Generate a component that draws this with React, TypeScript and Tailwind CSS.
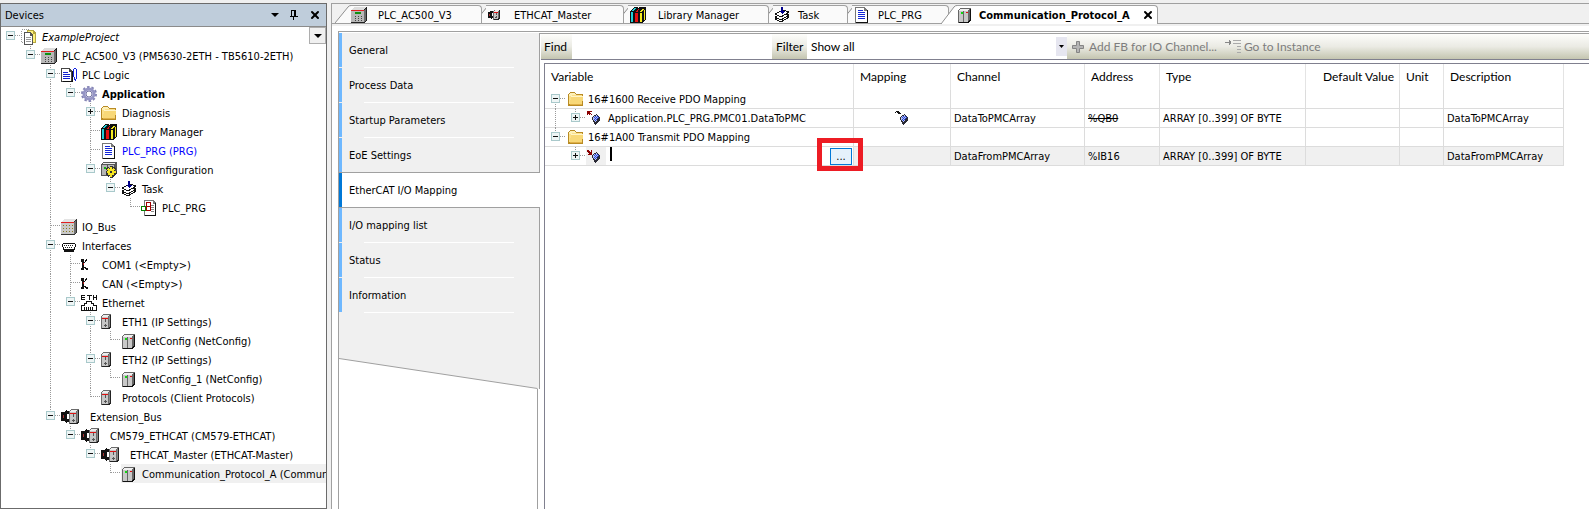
import React, { useState } from 'react';
import { X } from 'lucide-react';

type IconName =
  | 'project' | 'plc' | 'logic' | 'gear' | 'folder' | 'library' | 'pou' | 'taskConfig' | 'task'
  | 'call' | 'bus' | 'port' | 'plug' | 'ethernet' | 'device' | 'module' | 'plugDevice';

type TreeRow = { depth: number; icon: IconName; label: string; open?: boolean; style?: string };

const TREE: TreeRow[] = [
  { depth: 0, icon: 'project', label: 'ExampleProject', open: true, style: 'italic' },
  { depth: 1, icon: 'plc', label: 'PLC_AC500_V3 (PM5630-2ETH - TB5610-2ETH)', open: true },
  { depth: 2, icon: 'logic', label: 'PLC Logic', open: true },
  { depth: 3, icon: 'gear', label: 'Application', open: true, style: 'font-bold' },
  { depth: 4, icon: 'folder', label: 'Diagnosis', open: false },
  { depth: 4, icon: 'library', label: 'Library Manager' },
  { depth: 4, icon: 'pou', label: 'PLC_PRG (PRG)', style: 'text-[#0000ff]' },
  { depth: 4, icon: 'taskConfig', label: 'Task Configuration', open: true },
  { depth: 5, icon: 'task', label: 'Task', open: true },
  { depth: 6, icon: 'call', label: 'PLC_PRG' },
  { depth: 2, icon: 'bus', label: 'IO_Bus' },
  { depth: 2, icon: 'port', label: 'Interfaces', open: true },
  { depth: 3, icon: 'plug', label: 'COM1 (<Empty>)' },
  { depth: 3, icon: 'plug', label: 'CAN (<Empty>)' },
  { depth: 3, icon: 'ethernet', label: 'Ethernet', open: true },
  { depth: 4, icon: 'device', label: 'ETH1 (IP Settings)', open: true },
  { depth: 5, icon: 'module', label: 'NetConfig (NetConfig)' },
  { depth: 4, icon: 'device', label: 'ETH2 (IP Settings)', open: true },
  { depth: 5, icon: 'module', label: 'NetConfig_1 (NetConfig)' },
  { depth: 4, icon: 'device', label: 'Protocols (Client Protocols)' },
  { depth: 2, icon: 'plugDevice', label: 'Extension_Bus', open: true },
  { depth: 3, icon: 'plugDevice', label: 'CM579_ETHCAT (CM579-ETHCAT)', open: true },
  { depth: 4, icon: 'plugDevice', label: 'ETHCAT_Master (ETHCAT-Master)', open: true },
  { depth: 5, icon: 'module', label: 'Communication_Protocol_A (Communic' },
];

const SECTIONS = [
  'General', 'Process Data', 'Startup Parameters', 'EoE Settings',
  'EtherCAT I/O Mapping', 'I/O mapping list', 'Status', 'Information',
];

const COLUMNS = [
  { name: 'Variable', width: 'w-[309px]' },
  { name: 'Mapping', width: 'w-[97px]' },
  { name: 'Channel', width: 'w-[134px]' },
  { name: 'Address', width: 'w-[75px]' },
  { name: 'Type', width: 'w-[146px]' },
  { name: 'Default Value', width: 'w-[94px]' },
  { name: 'Unit', width: 'w-[44px]' },
  { name: 'Description', width: 'w-[120px]' },
];

// Is there another row at this depth before the branch closes?
const hasNext = (index: number, depth: number) => {
  for (let i = index + 1; i < TREE.length; i++) {
    if (TREE[i].depth < depth) return false;
    if (TREE[i].depth === depth) return true;
  }
  return false;
};

const DeviceBox = () => (
  <>
    <path d="M0 2 2 0h8v13l-2 2H0z" fill="#6a6a6a" />
    <path d="M1 2 3 1h5L7 3H1z" fill="#ececec" />
    <path d="M1 3h6v11H1z" fill="#c6c6c6" />
    <path d="M8 2h1v11H8z" fill="#8a8a8a" />
    <path d="M9 1h1v12l-2 2H1v-1h6l2-2z" fill="#222" />
    <path d="M1 4h6v1H1z" fill="#e01010" />
    <path d="M4 5h1v3H4zM3 11h3v1H3zM4 10h1v3H4z" fill="#555" />
  </>
);

const ICONS: Record<IconName, React.ReactNode> = {
  project: (
    <>
      <path d="M.5.500h8v13h-8z" fill="none" stroke="#999" strokeDasharray="1 1" />
      <path d="M6 1h6l3 3v10H6z" fill="#b5a642" />
      <path d="M7 2h5v3h2v8H7z" fill="#fff27a" />
      <path d="M3 3h6l3 3v10H3z" fill="#555" />
      <path d="M4 4h5v3h2v8H4z" fill="#fff" />
      <path d="M5 8.500h5M5 10.500h5M5 12.500h5" stroke="#999" />
    </>
  ),
  plc: (
    <>
      <path d="M0 3 3 0h13v13l-3 3H0z" fill="#222" />
      <path d="M0 3 3 0h12l-2 3z" fill="#ddd" />
      <path d="M0 3h13v12H0z" fill="#b8b8b8" />
      <path d="M13 3 15 1v12l-2 2z" fill="#6b6b6b" />
      <path d="M0 3h13v1H0z" fill="#e02020" />
      <path d="M4 5h6v2H4z" fill="#109010" />
      <path d="M4 9h1v1H4zM7 9h1v1H7zM10 9h1v1h-1zM4 11h1v1H4zM7 11h1v1H7zM10 11h1v1h-1zM4 13h1v1H4zM7 13h1v1H7zM10 13h1v1h-1z" fill="#444" />
    </>
  ),
  logic: (
    <>
      <path d="M0 1h8l3 3v11H0z" fill="#444" />
      <path d="M1 2h7v3h2v9H1z" fill="#fff" />
      <path d="M2 5.500h5M2 7.500h7M2 9.500h7M2 11.500h7" stroke="#1020d0" />
      <path d="M11 4h1v11H2v-1h9z" fill="#111" />
      <path d="M13 1h2v1h-2zM12 2h1v8h-1zM15 2h1v10h-1zM13 10h1v3h-1zM14 12h1v2h-1z" fill="#1020e0" />
    </>
  ),
  gear: (
    <>
      <circle cx="8" cy="8" r="7" fill="none" stroke="#8585b5" strokeWidth="2" strokeDasharray="2.500 1.900" />
      <circle cx="8" cy="8" r="5" fill="none" stroke="#9595c5" strokeWidth="3" />
      <circle cx="8" cy="8" r="3" fill="#fff" stroke="#7777a5" />
    </>
  ),
  folder: (
    <>
      <path d="M0 3 2 1h4l2 2h7v12H0z" fill="#b98b24" />
      <path d="M1 3l1-1h4l2 2h6v3H1z" fill="#fdf0b8" />
      <path d="M1 5h2l1-1h10v9H1z" fill="#fbe08a" />
      <path d="M3 5h12v1l-1 8H2z" fill="#f8d878" />
      <path d="M3 5h12v1H3z" fill="#fff4c8" />
      <path d="M2 13h12v1H2z" fill="#e0b048" />
    </>
  ),
  library: (
    <>
      <path d="M0 5 4 0h3l1 1 2-1h6v12l-3 4H0z" fill="#111" />
      <path d="M1 5h2v10H1zM2 4l2-3h2L4 4z" fill="#20d0d8" />
      <path d="M5 6h3v9H5zM5 5l3-3h1L8 5z" fill="#e81010" />
      <path d="M10 6h2v9h-2zM14 3h1v9l-1 1zM10 5l2-3h2l-2 3z" fill="#f5ea20" />
    </>
  ),
  pou: (
    <>
      <path d="M1 0h9l3 3v13H1z" fill="#777" />
      <path d="M2 1h8v3h3v11H2z" fill="#fff" />
      <path d="M13 3h1v13H2v-1h11z" fill="#111" />
      <path d="M4 3.500h5M4 5.500h7M4 7.500h7M4 9.500h7M4 11.500h7" stroke="#1428d8" />
    </>
  ),
  taskConfig: (
    <>
      <path d="M0 2 2 0h14v11l-2 3H0z" fill="#555" />
      <path d="M1 3h5v10H1zM7 3h6v10H7z" fill="#b5b5b5" />
      <path d="M1 2 3 1h12l-2 1z" fill="#eee" />
      <path d="M3 5h2v2H3z" fill="#10b010" />
      <path d="M10 4v12M4.500 10h11.500M6 6l8 8M14 6l-8 8" stroke="#333" strokeWidth="3" />
      <path d="M10 5v10M5.500 10h9M7 7l6 6M13 7l-6 6" stroke="#f5e520" strokeWidth="2" />
      <path d="M9 9h2v2H9z" fill="#333" />
    </>
  ),
  task: (
    <>
      <path d="M1 12l8-4 6 2-8 5z" fill="#fff" stroke="#111" />
      <path d="M1 10l8-4 6 2-8 5z" fill="#fff" stroke="#111" />
      <path d="M1 7l8-4 6 2-8 5z" fill="#fff" stroke="#111" />
      <path d="M7 0h2v4h2L8 7 5 4h2z" fill="#00008b" />
    </>
  ),
  call: (
    <>
      <path d="M3 0h9l3 3v13H3z" fill="#777" />
      <path d="M4 1h8v3h2v11H4z" fill="#fff" />
      <path d="M14 3h1v13H4v-1h10z" fill="#111" />
      <path d="M10 5.500h3M10 7.500h3M10 9.500h3M10 11.500h3" stroke="#888" />
      <path d="M5.500 2.500h4v4h-4z" fill="#fff" stroke="#a00000" />
      <path d="M5.500 6.500h4v4h-4z" fill="#fff" stroke="#a00000" />
      <path d="M.5 6.500h4v4h-4z" fill="#fff" stroke="#008000" />
    </>
  ),
  bus: (
    <>
      <path d="M0 3 3 0h13v13l-3 3H0z" fill="#333" />
      <path d="M0 3 3 0h12l-2 3z" fill="#e4e4e4" />
      <path d="M0 3h13v12H0z" fill="#c9c9c9" />
      <path d="M13 3 15 1v12l-2 2z" fill="#707070" />
      <path d="M0 3h13v1H0z" fill="#e02020" />
      <path d="M2 6.500h10M2 9.500h10M2 12.500h10" stroke="#8a7b20" strokeDasharray="1 2" />
    </>
  ),
  port: (
    <>
      <path d="M2 5h12v1h1v3h-1v3h-1v2H3v-2H2V9H1V6h1z" fill="#111" />
      <path d="M2 6h12v3h-1v2H3V9H2z" fill="#fff" />
      <path d="M3 7.500h10M4 9.500h8" stroke="#222" strokeDasharray="1 1" />
    </>
  ),
  plug: (
    <>
      <path d="M0 2h3v3h1v1H3v4h1v1H3v2H0v-2h1V5H0z" fill="#111" />
      <path d="M4 3h1v2H4zM5 2h1v2H5zM4 10h1v2H4zM5 11h2v2H5z" fill="#111" />
      <path d="M2 6h1v2H2z" fill="#b01010" />
    </>
  ),
  ethernet: (
    <>
      <path d="M0 0h4v1H1v1h3v1H1v1h3v1H0zM6 0h5v1H9v4H8V1H6zM12 0h1v2h2V0h1v5h-1V3h-2v2h-1z" fill="#111" />
      <path d="M.5 15.500v-5h3v-2h2v-2h5v2h2v2h3v5z" fill="#fff" stroke="#111" />
      <path d="M3 13.500h10" stroke="#111" strokeWidth="3" strokeDasharray="1 1" />
    </>
  ),
  device: <DeviceBox />,
  module: (
    <>
      <path d="M1 3 4 1h10v12l-3 3H1z" fill="#666" />
      <path d="M2 3l2-1h8l-2 2H2z" fill="#f0f0f0" />
      <path d="M2 4h4v11H2zM7 4h4v11H7z" fill="#c8c8c8" />
      <path d="M13 2h1v11l-3 3H2v-1h9l2-3z" fill="#111" />
      <path d="M4 5h2v2H4z" fill="#10d810" />
      <path d="M9 5h2v1H9z" fill="#e01010" />
    </>
  ),
  plugDevice: (
    <>
      <path d="M0 3h3l3-2v13l-3-2H0z" fill="#111" />
      <path d="M6 5l2-3M6 10l2 3" stroke="#111" strokeWidth="2" />
      <path d="M2 6h1v3H2z" fill="#a33" />
      <g transform="translate(8 0)"><DeviceBox /></g>
    </>
  ),
};

const Icon = ({ name, small }: { name: IconName; small?: boolean }) => (
  <svg
    className={`h-4 shrink-0 ${name === 'plugDevice' && !small ? 'w-6' : 'w-4'}`}
    viewBox={name === 'plugDevice' ? '0 0 24 16' : '0 0 16 16'}
    shapeRendering={name === 'gear' ? 'auto' : 'crispEdges'}
    aria-hidden="true"
  >
    {ICONS[name]}
  </svg>
);

const Expander = ({ open }: { open: boolean }) => (
  <>
    <path d="M5 4h9v9H5z" fill="#eef5f5" />
    <path d="M5.500 4.500h8v8h-8z" fill="none" stroke="#a9c9cb" />
    <path d="M7 8.500h5" stroke="#111" />
    {!open && <path d="M9.500 6v5" stroke="#111" />}
  </>
);

// One 20px indent step with its dotted guide lines.
const Guide = ({ up, down, across, open }: { up?: boolean; down?: boolean; across?: boolean; open?: boolean }) => (
  <svg className="h-[19px] w-5 shrink-0" viewBox="0 0 20 19" shapeRendering="crispEdges" aria-hidden="true">
    <g stroke="#9a9a9a" strokeDasharray="1 1" fill="none">
      {up && <path d="M9.500 0v9" />}
      {down && <path d="M9.500 8v11" />}
      {across && <path d="M10 8.500h10" />}
    </g>
    {open !== undefined && <Expander open={open} />}
  </svg>
);

const DeviceTree = () => (
  <aside className="flex w-[327px] shrink-0 flex-col border border-[#6b6b6b] bg-white">
    <header className="flex h-[23px] shrink-0 items-center justify-between border-b border-[#8b8b8b] bg-[#bfcddb] pl-1 pr-[5px]">
      <h2 className="pt-[2px]">Devices</h2>
      <div className="flex items-center gap-[11px]">
        <button aria-label="Window position">
          <svg className="h-2 w-2" viewBox="0 0 8 8" aria-hidden="true"><path d="M0 2h8L4 6z" /></svg>
        </button>
        <button aria-label="Auto hide">
          <svg className="h-[10px] w-2" viewBox="0 0 8 10" shapeRendering="crispEdges" aria-hidden="true">
            <path d="M1.500 6V.5h4V6M0 6.500h8M3.500 7v3M4.500 0v6" fill="none" stroke="#000" />
          </svg>
        </button>
        <button aria-label="Close"><X size={12} strokeWidth={4} /></button>
      </div>
    </header>
    <div className="flex min-h-0 flex-1 items-start overflow-hidden">
      <ul className="w-0 min-w-0 flex-1">
        {TREE.map((row, i) => (
          <li key={i} className="flex h-[19px] items-center">
            {Array.from({ length: row.depth }, (_, k) => (
              <Guide key={k} up={hasNext(i, k)} down={hasNext(i, k)} />
            ))}
            <Guide up={i > 0} down={hasNext(i, row.depth)} across open={row.open} />
            <div className={`flex h-full min-w-0 flex-1 items-center gap-[5px] whitespace-nowrap ${i === TREE.length - 1 ? '-mr-[22px] bg-[#f0f0f0]' : ''}`}>
              <Icon name={row.icon} />
              <span className={`pt-[2px] ${row.style ?? ''}`}>{row.label}</span>
            </div>
          </li>
        ))}
      </ul>
      <button aria-label="Tree options" className="flex h-[17px] w-[17px] items-center justify-center border border-[#adadad] bg-[#f0f0f0]">
        <svg className="h-2 w-2" viewBox="0 0 8 8" aria-hidden="true"><path d="M0 2h8L4 6z" /></svg>
      </button>
    </div>
  </aside>
);

const TABS: { label: string; icon: IconName; width: string; pad: string }[] = [
  { label: 'PLC_AC500_V3', icon: 'plc', width: 'w-[147px]', pad: 'gap-[11px]' },
  { label: 'ETHCAT_Master', icon: 'plugDevice', width: 'w-[142px]', pad: 'gap-[10px] pl-[2px]' },
  { label: 'Library Manager', icon: 'library', width: 'w-[145px]', pad: 'gap-3 pl-[2px]' },
  { label: 'Task', icon: 'task', width: 'w-[79px]', pad: 'gap-2 pl-px' },
  { label: 'PLC_PRG', icon: 'pou', width: 'w-[101px]', pad: 'gap-2 pl-[2px]' },
];

const EditorTabs = () => (
  <div role="tablist" className="flex h-5 shrink-0 items-start border-b border-[#a0a0a0] bg-[#f0f0f0] pl-[3px] pt-px">
    {TABS.map((tab, i) => (
      <button key={tab.label} role="tab" aria-selected={false} className={`flex h-[18px] whitespace-nowrap ${tab.width}`}>
        <svg className={`h-[18px] shrink-0 ${i === 0 ? 'w-4' : 'w-2'}`} viewBox={i === 0 ? '0 0 16 18' : '8 0 8 18'} aria-hidden="true">
          <path d={i === 0 ? 'M0 18 14 2l2-2v18z' : 'M8 9l6-7 2-2v18H8z'} fill="#fafafa" />
          <path d="M0 18 13 2Q14 .5 16 .5" fill="none" stroke="#909090" />
        </svg>
        <span className={`flex h-full flex-1 items-center rounded-tr-sm border-r border-t border-[#a0a0a0] bg-[#fafafa] ${tab.pad} ${i ? '-ml-1' : ''}`}>
          <Icon name={tab.icon} small />
          <span className="pt-[2px]">{tab.label}</span>
        </span>
      </button>
    ))}
    <button role="tab" aria-selected className="-ml-2 flex h-[19px] whitespace-nowrap font-bold">
      <svg className="h-[19px] w-4 shrink-0" viewBox="0 0 16 19" aria-hidden="true">
        <path d="M0 19 13 2l3-2v19z" fill="#fff" />
        <path d="M0 19 13 2Q14 .5 16 .5" fill="none" stroke="#909090" />
      </svg>
      <span className="flex h-full items-center gap-[6px] rounded-tr-sm border-r border-t border-[#a0a0a0] bg-white pr-[3px]">
        <Icon name="module" />
        <span className="pt-px">Communication_Protocol_A</span>
        <X size={12} strokeWidth={4} className="ml-[6px]" />
      </span>
    </button>
  </div>
);

const SectionNav = ({ active, onSelect }: { active: string; onSelect: (s: string) => void }) => (
  <nav className="flex w-[201px] shrink-0 flex-col">
    {SECTIONS.map((name) => {
      const selected = name === active;
      return (
        <button
          key={name}
          onClick={() => onSelect(name)}
          className={`flex h-[35px] items-stretch text-left ${selected ? 'border-b border-[#a0a0a0] bg-white shadow-[0_-1px_0_#a0a0a0]' : 'border-r border-r-[#a0a0a0] bg-[#f0f0f0]'}`}
        >
          <span className={`w-[3px] shrink-0 ${selected ? 'bg-[#0078d7]' : 'mb-px bg-[#6eb8ff]'}`} />
          <span className="ml-[7px] flex w-[165px] flex-col">
            <span className="flex flex-1 items-center pt-[2px]">{name}</span>
            {!selected && <span className="ml-[15px] h-px shrink-0 bg-white" />}
          </span>
        </button>
      );
    })}
    <svg className="h-[76px] w-full shrink-0" viewBox="0 0 201 76" preserveAspectRatio="none" aria-hidden="true">
      <path d="M0 0h201v75.500h-2L0 45.500z" fill="#f0f0f0" />
      <path d="M0 45.500l198.500 30M200.500 0v76" fill="none" stroke="#a0a0a0" />
    </svg>
    <div className="mr-[2px] flex-1 border-r border-[#a0a0a0]" />
  </nav>
);

const Toolbar = () => (
  <div className="ml-px flex h-[26px] shrink-0 items-stretch border-b border-[#80808f] bg-linear-to-b from-[#fdfdfb] via-[#ebebe4] to-[#c4c5b0] font-['Lato','Open_Sans',sans-serif] text-xs">
    <label htmlFor="find" className="flex w-[31px] items-center pl-[3px]">Find</label>
    <input id="find" className="w-[200px] bg-white px-1 outline-none" />
    <label htmlFor="filter" className="flex w-[35px] items-center pl-1">Filter</label>
    <div className="relative flex w-[260px] bg-white">
      <select id="filter" className="w-full appearance-none bg-white pl-1 pt-px outline-none">
        <option>Show all</option>
      </select>
      <span className="pointer-events-none absolute inset-y-0 right-0 my-[3px] flex w-[11px] items-center justify-center bg-[#e6e6f0]">
        <svg className="h-1 w-[5px]" viewBox="0 0 5 4" aria-hidden="true"><path d="M0 0h5L2.500 3z" /></svg>
      </span>
    </div>
    <button disabled className="flex items-center gap-[5px] whitespace-nowrap pl-[5px] text-[#7d7d7d]">
      <svg className="h-3 w-3" viewBox="0 0 12 12" aria-hidden="true">
        <path d="M4.500.5h3v4h4v3h-4v4h-3v-4h-4v-3h4z" fill="#b5b5b5" stroke="#858585" />
      </svg>
      Add FB for IO Channel...
    </button>
    <button disabled className="flex items-center gap-[3px] whitespace-nowrap pl-2 text-[#7d7d7d]">
      <svg className="h-4 w-4" viewBox="0 0 16 16" shapeRendering="crispEdges" aria-hidden="true">
        <path d="M0 3.500h6M4 1v5M5 2v3" stroke="#888" />
        <path d="M8 1.500h8M8 4.500h8M12 7.500h4M12 10.500h4M12 13.500h4" stroke="#aaa" />
      </svg>
      Go to Instance
    </button>
  </div>
);

const ChannelIcon = ({ dir }: { dir: 'out' | 'in' | 'map' }) => (
  <svg className="h-4 w-4 shrink-0" viewBox="0 0 16 16" shapeRendering="crispEdges" aria-hidden="true">
    {dir === 'out' && <path d="M1 1h5v1H4v1h1v1h1v1H5V4H4v1H3V4H2v1H1z" fill="#8b0000" />}
    {dir === 'in' && <path d="M1 2h2v1h1v1h1V2h1v5H2V6h1V5H2V4H1z" fill="#8b0000" />}
    {dir === 'map' && <path d="M1 2h1V1h3v1h1v1h1v1H4V3H3V2H2v1H1z" fill="#111" />}
    <path d="M10 4h1v1h1v1h1v1h1v4h-1v1h-1v1h-1v1h-1v1H9v-1H8v-2H7v-2H6V7h1V6h1V5h2z" fill="#2a2a35" />
    <path d="M10 5h1v1h1v1h1v1h-1v1h-1v2h-1v1H9v-1H8v-1H7V7h1V6h2z" fill="#b6c2f2" />
    <path d="M9 6h1v1H9zM11 6h1v1h-1zM8 7h1v1H8zM10 7h1v1h-1zM12 7h1v1h-1zM9 8h1v1H9zM11 8h1v1h-1zM8 9h1v1H8zM10 9h1v1h-1zM9 10h1v1H9z" fill="#2440d8" />
  </svg>
);

const GroupRow = ({ label, last }: { label: string; last?: boolean }) => (
  <tr className="h-[19px]">
    <td className="border-b border-r border-[#dcdcdc] p-0">
      <div className="flex h-[18px] items-center whitespace-nowrap pl-px">
        <Guide up={last} down={!last} across open />
        <span className="ml-[2px] flex"><Icon name="folder" /></span>
        <span className="pl-1 pt-[2px]">{label}</span>
      </div>
    </td>
    {COLUMNS.slice(1).map((c) => <td key={c.name} className="border-b border-r border-[#dcdcdc] p-0" />)}
  </tr>
);

const MappingTable = () => {
  const [variable, setVariable] = useState('');
  const cell = 'whitespace-nowrap border-b border-r border-[#dcdcdc] p-0 pl-[3px] pt-[2px]';

  return (
    <table className="w-[1019px] table-fixed border-separate border-spacing-0">
      <thead>
        <tr className="h-[26px] font-['Lato','Open_Sans',sans-serif] text-xs">
          {COLUMNS.map((c) => (
            <th
              key={c.name}
              className={`whitespace-nowrap border-r border-[#e4e4e4] p-0 font-normal ${c.width} ${c.name === 'Default Value' ? 'pr-[5px] text-right' : 'pl-[6px] text-left'}`}
            >
              {c.name}
            </th>
          ))}
        </tr>
      </thead>
      <tbody>
        <GroupRow label="16#1600 Receive PDO Mapping" />
        <tr className="h-[19px]">
          <td className="border-b border-r border-[#dcdcdc] p-0">
            <div className="flex h-[18px] items-center whitespace-nowrap pl-px">
              <Guide up down />
              <Guide up across open={false} />
              <ChannelIcon dir="out" />
              <span className="pl-[6px] pt-[2px]">Application.PLC_PRG.PMC01.DataToPMC</span>
            </div>
          </td>
          <td className="border-b border-r border-[#dcdcdc] p-0"><div className="flex justify-center"><ChannelIcon dir="map" /></div></td>
          <td className={cell}>DataToPMCArray</td>
          <td className={cell}><s>%QB0</s></td>
          <td className={cell}>ARRAY [0..399] OF BYTE</td>
          <td className={cell} />
          <td className={cell} />
          <td className={cell}>DataToPMCArray</td>
        </tr>
        <GroupRow label="16#1A00 Transmit PDO Mapping" last />
        <tr className="h-[19px] bg-[#f0f0f0]">
          <td className="border-b border-r border-[#dcdcdc] bg-white p-0">
            <div className="relative flex h-[18px] items-center pl-px">
              <Guide />
              <Guide up across open={false} />
              <span className="flex h-full w-5 items-center bg-[#f0f0f0]"><ChannelIcon dir="in" /></span>
              <span className="ml-1 h-[14px] w-[2px] self-start bg-black" />
              <input
                aria-label="Variable"
                value={variable}
                onChange={(e) => setVariable(e.target.value)}
                className="h-full min-w-0 flex-1 outline-none"
              />
              <button aria-label="Browse" className="mr-px flex h-[17px] w-[22px] items-center justify-center border border-[#0078d7] bg-[#e5f1fb] pt-[2px]">...</button>
              <span className="pointer-events-none absolute -right-[10px] -top-[9px] h-[33px] w-[46px] border-5 border-[#ed1c24]" />
            </div>
          </td>
          <td className={cell} />
          <td className={cell}>DataFromPMCArray</td>
          <td className={cell}>%IB16</td>
          <td className={cell}>ARRAY [0..399] OF BYTE</td>
          <td className={cell} />
          <td className={cell} />
          <td className={cell}>DataFromPMCArray</td>
        </tr>
      </tbody>
    </table>
  );
};

export default function App() {
  const [section, setSection] = useState('EtherCAT I/O Mapping');

  return (
    <div className="flex h-screen gap-1 overflow-hidden bg-[#f0f0f0] pt-[3px] font-['DejaVu_Sans_Condensed','Noto_Sans',sans-serif] text-[11px] leading-4 text-black">
      <DeviceTree />
      <main className="flex min-w-0 flex-1 flex-col border-l border-t border-[#a0a0a0] bg-white">
        <EditorTabs />
        <div className="h-[2px] shrink-0 bg-[#f0f0f0]" />
        <div className="ml-[6px] mt-[5px] flex min-h-0 flex-1 border-l border-t border-[#a0a0a0] pt-px">
          <SectionNav active={section} onSelect={setSection} />
          <section className="flex min-w-0 flex-1 flex-col border-t border-[#a0a0a0]">
            <Toolbar />
            <div className="ml-1 mt-[3px] min-h-0 flex-1 border-l border-t border-[#80808f]">
              <MappingTable />
            </div>
          </section>
        </div>
      </main>
    </div>
  );
}
